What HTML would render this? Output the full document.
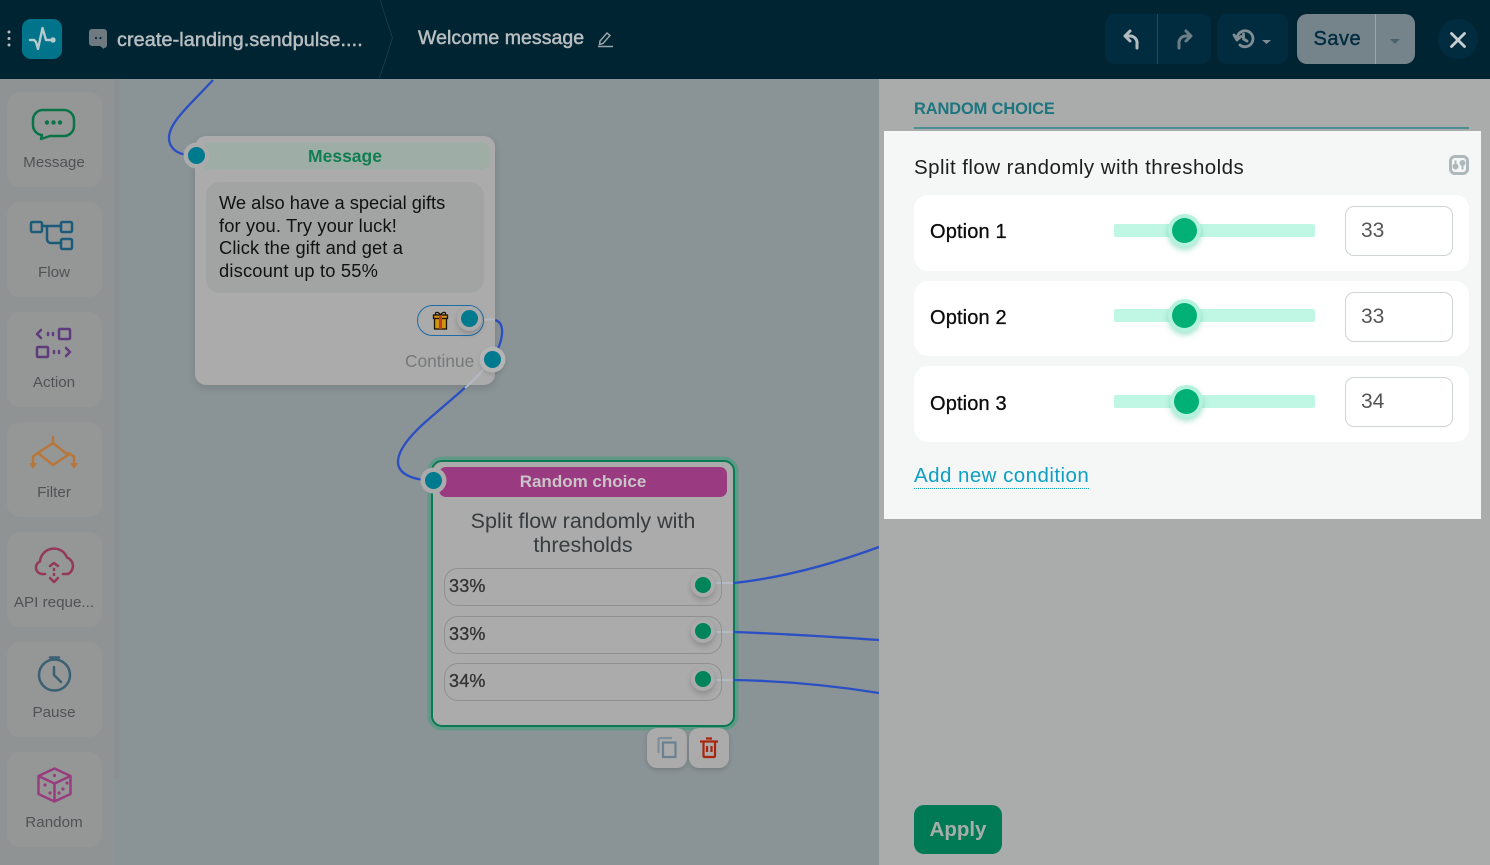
<!DOCTYPE html>
<html><head><meta charset="utf-8">
<style>
*{box-sizing:border-box;margin:0;padding:0}
html,body{width:1490px;height:865px;overflow:hidden}
body{position:relative;background:#8a9396;font-family:"Liberation Sans",sans-serif}
.a{position:absolute}
.t{position:absolute;white-space:nowrap}
#top{left:0;top:0;width:1490px;height:79px;background:#012433}
#side{left:0;top:79px;width:114px;height:786px;background:#909393}
#sb{left:114px;top:79px;width:5px;height:700px;background:#8b8f90}
.tile{position:absolute;left:7px;width:95px;height:95px;background:#959797;border-radius:13px}
.lab{position:absolute;left:0;width:108px;text-align:center;font-size:15.2px;color:#4f5355;white-space:nowrap}
.dot{position:absolute;border-radius:50%;background:#007a8f;width:17px;height:17px;box-shadow:0 0 0 4.5px #ababab}
.gd{position:absolute;left:695px;width:16px;height:16px;border-radius:50%;background:#00845a;box-shadow:0 0 0 4px #ababab,0 3px 6px 4px rgba(0,0,0,.18)}
.pill{position:absolute;left:444px;width:278px;height:38px;border:1px solid #8e9191;border-radius:14px;font-size:18px;color:#333;line-height:35px;padding-left:4px;letter-spacing:.2px;-webkit-text-stroke:.3px #333}
.row{position:absolute;left:914px;width:555px;height:76px;background:#fff;border-radius:14px}
.tr{position:absolute;left:1114px;width:201px;height:13px;background:#c0f6e4;border-radius:2px}
.th{position:absolute;width:25px;height:25px;border-radius:50%;background:#00b074;box-shadow:0 0 0 4px #b5f2dd,0 3px 6px 4px rgba(0,179,119,.35)}
.inp{position:absolute;left:1345px;width:108px;height:50px;border:1px solid #cfd4d4;border-radius:9px;background:#fff;font-size:21px;color:#555;line-height:48px;padding-left:15px}
.opt{position:absolute;left:930px;font-size:20px;color:#0c0c0c;white-space:nowrap;letter-spacing:.15px;-webkit-text-stroke:.3px #0c0c0c}
</style></head><body>
<div class="a" id="side"></div><div class="a" id="sb"></div>

<div class="tile" style="top:92px"></div><div class="tile" style="top:202px"></div><div class="tile" style="top:312px"></div><div class="tile" style="top:422px"></div><div class="tile" style="top:532px"></div><div class="tile" style="top:642px"></div><div class="tile" style="top:752px"></div>
<div class="lab" style="top:154px">Message</div>
<div class="lab" style="top:264px">Flow</div>
<div class="lab" style="top:374px">Action</div>
<div class="lab" style="top:484px">Filter</div>
<div class="lab" style="top:594px">API reque...</div>
<div class="lab" style="top:704px">Pause</div>
<div class="lab" style="top:814px">Random</div>

<svg class="a" style="left:0;top:0" width="120" height="865" fill="none" stroke-width="2.500" stroke-linecap="round" stroke-linejoin="round">
<path d="M42 110h22a10 10 0 0 1 10 10v6a10 10 0 0 1-10 10H50l-9 3 1-4a10 10 0 0 1-9-9v-6a10 10 0 0 1 9-10z" stroke="#0b7348"/>
<g fill="#0b7348" stroke="none"><circle cx="47" cy="122.500" r="2.200"/><circle cx="53.500" cy="122.500" r="2.200"/><circle cx="60" cy="122.500" r="2.200"/></g>
<g stroke="#1c5a7a"><rect x="31" y="222" width="11" height="10" rx="1.500"/><rect x="61" y="222" width="11" height="10" rx="1.500"/><rect x="61" y="239" width="11" height="10" rx="1.500"/><path d="M42 226h19M47 226v13a4 4 0 0 0 4 4h10"/></g>
<g stroke="#5f3a7d"><path d="M41 330l-4 4 4 4M48 333v2M53 333v2"/><rect x="59" y="329" width="11" height="10" rx="1"/><rect x="37" y="347" width="11" height="10" rx="1"/><path d="M54 351v2M59 351v2M66 348l4 4-4 4"/></g>
<g stroke="#b8763a"><path d="M53 437v6M53 443l-15 10 15 12 15-10zM38 453l-5 3.500v8M68 453l6 3.500v8"/></g>
<g fill="#b8763a" stroke="none"><path d="M29 463h8l-4 6zM70 463h8l-4 6z"/></g>
<g stroke="#93395a"><path d="M45 574h-3a6.500 6.500 0 0 1-2-12.500 14 14 0 0 1 27-4 9 9 0 0 1 1 16.500h-5"/><path d="M50 566l4-3 4 3M54 569v1M54 574v1M50 578l4 4 4-4"/></g>
<g stroke="#3b6074"><circle cx="54.500" cy="675" r="15.500"/><path d="M50 657.500h9M54 667v8l7 7"/></g>
<g stroke="#983c80"><path d="M54.500 768.500l16 7.500v18l-16 7.500-16-7.500v-18zM38.500 776l16 7.500 16-7.500M54.500 783.500v18"/></g>
<g fill="#983c80" stroke="none"><circle cx="54.500" cy="775.500" r="1.600"/><circle cx="45" cy="785" r="1.600"/><circle cx="50" cy="793" r="1.600"/><circle cx="59" cy="793" r="1.600"/><circle cx="63" cy="789" r="1.600"/><circle cx="67" cy="783" r="1.600"/></g>
</svg>

<svg class="a" style="left:0;top:0" width="880" height="865" fill="none" stroke="#2a4fc4" stroke-width="2.300">
<path d="M213 80C190 105 169 122 169 138C169 148 177 154 188 155"/>
<path d="M495 320C503 322 503 332 501 340C499 348 496 354 490 361C478 378 460 392 430 418C410 435 398 450 398 462C398 472 408 478 424 480"/>
</svg>

<!-- Message card -->
<div class="a" style="left:195px;top:136px;width:300px;height:249px;background:#ababab;border-radius:11px;box-shadow:0 3px 8px rgba(0,0,0,.12)"></div>
<svg class="a" style="left:0;top:0" width="880" height="865" fill="none" stroke="#b4b9c4" stroke-width="2"><path d="M484 320C488 319 492 319 495 320M490 361C482 372 474 380 465 388"/></svg>
<div class="a t" style="left:201px;top:142px;width:288px;height:28px;background:#9eaea7;border-radius:8px;text-align:center;font-size:17.500px;font-weight:bold;color:#0f7e52;line-height:28px">Message</div>
<div class="a" style="left:206px;top:182px;width:278px;height:111px;background:#a2a3a3;border-radius:14px"></div>
<div class="t" style="left:219px;top:192px;font-size:18.300px;line-height:22.700px;color:#111">We also have a special gifts<br><span style="letter-spacing:.14px">for you. Try your luck!</span><br><span style="letter-spacing:.13px">Click the gift and get a</span><br><span style="letter-spacing:.2px">discount up to 55%</span></div>
<div class="a" style="left:417px;top:305px;width:67px;height:31px;border:1px solid #1c6ca8;border-radius:16px"></div>
<svg class="a" style="left:431px;top:310px" width="20" height="20"><rect x="3.500" y="6" width="12" height="13" fill="#cf9410" stroke="#1b1200" stroke-width="1.300"/><rect x="2.500" y="5" width="14" height="3.500" fill="#cf9410" stroke="#1b1200" stroke-width="1.300"/><rect x="8" y="5" width="3" height="14" fill="#c0392b"/><path d="M9.500 5C7 1 3 2 5 5M9.500 5C12 1 16 2 14 5" fill="none" stroke="#1b1200" stroke-width="1.300"/></svg>
<div class="dot" style="left:461px;top:310px;box-shadow:0 0 0 4px #ababab,0 3px 6px 4px rgba(0,0,0,.18)"></div>
<div class="t" style="left:405px;top:351px;font-size:17.300px;color:#76797a">Continue</div>
<div class="dot" style="left:484px;top:351px;box-shadow:0 0 0 4.500px #b4b4b4,0 2px 5px 4px rgba(0,0,0,.15)"></div>
<div class="dot" style="left:188px;top:147px"></div>

<!-- Random card -->
<div class="a" style="left:431px;top:460px;width:304px;height:267px;background:#ababab;border:2px solid #0a7a55;border-radius:11px;box-shadow:0 0 0 3.500px #5f9a86"></div>
<svg class="a" style="left:0;top:0" width="880" height="865" fill="none" stroke-width="2.300">
<path d="M716 583H733M716 632H733M716 680H733" stroke="#b4b9c4" stroke-width="2"/>
<g stroke="#2a4fc4"><path d="M734 583C780 578 830 565 879 547"/>
<path d="M734 632C790 634 835 637 879 640"/>
<path d="M734 680C790 681 835 686 879 693"/></g></svg>
<div class="a t" style="left:439px;top:467px;width:288px;height:30px;background:#9a3a80;border-radius:7px;text-align:center;font-size:17px;font-weight:bold;color:#c9c4c8;line-height:29px">Random choice</div>
<div class="dot" style="left:425px;top:472px"></div>
<div class="t" style="left:439px;top:509px;width:288px;text-align:center;font-size:21.500px;line-height:24px;color:#383c3e;white-space:normal">Split flow randomly with<br>thresholds</div>
<div class="pill" style="top:568px">33%</div>
<div class="pill" style="top:616px">33%</div>
<div class="pill" style="top:663px">34%</div>
<div class="gd" style="top:577px"></div>
<div class="gd" style="top:623px"></div>
<div class="gd" style="top:671px"></div>
<div class="a" style="left:647px;top:728px;width:40px;height:40px;background:#ababab;border-radius:10px;box-shadow:0 2px 5px rgba(0,0,0,.15)"></div>
<div class="a" style="left:689px;top:728px;width:40px;height:40px;background:#ababab;border-radius:10px;box-shadow:0 2px 5px rgba(0,0,0,.15)"></div>
<svg class="a" style="left:647px;top:728px" width="82" height="40" fill="none" stroke-width="2.200"><path d="M25 10H13a1.500 1.500 0 0 0-1.500 1.500V25" stroke="#7f8f9a"/><rect x="16" y="14.500" width="12.500" height="14.500" stroke="#6a8192"/><path d="M53 13.500h18M56.500 13.500V28a1 1 0 0 0 1 1h9.500a1 1 0 0 0 1-1V13.500M59 10.500h6M60 18v6M64.500 18v6" stroke="#a8260f"/></svg>

<!-- Right panel -->
<div class="a" style="left:879px;top:79px;width:611px;height:786px;background:#aaacab"></div>
<div class="t" style="left:914px;top:100px;font-size:16.400px;font-weight:bold;color:#1d7580;letter-spacing:-.1px">RANDOM CHOICE</div>
<div class="a" style="left:914px;top:127px;width:555px;height:2px;background:#4c8e97"></div>
<div class="a" style="left:884px;top:131px;width:597px;height:388px;background:#f5f7f7"></div>
<div class="t" style="left:914px;top:156px;font-size:20.500px;color:#1e1e1e;letter-spacing:.45px">Split flow randomly with thresholds</div>
<svg class="a" style="left:1448px;top:154px" width="22" height="22" fill="none" stroke="#adb8ba" stroke-width="2"><rect x="2.500" y="2.500" width="17" height="17" rx="4.500" stroke-width="3"/><path d="M7.500 6.500v9M14.500 6.500v9" /><circle cx="7.500" cy="12.500" r="2" fill="#adb8ba"/><circle cx="14.500" cy="9" r="2" fill="#adb8ba"/></svg>
<div class="row" style="top:195px"></div>
<div class="row" style="top:281px;height:75px"></div>
<div class="row" style="top:366px"></div>
<div class="opt" style="top:221px">Option 1</div>
<div class="opt" style="top:307px">Option 2</div>
<div class="opt" style="top:393px">Option 3</div>
<div class="tr" style="top:224px"></div>
<div class="tr" style="top:309px"></div>
<div class="tr" style="top:395px"></div>
<div class="th" style="left:1172px;top:218px"></div>
<div class="th" style="left:1172px;top:303px"></div>
<div class="th" style="left:1174px;top:389px"></div>
<div class="inp" style="top:206px">33</div>
<div class="inp" style="top:292px">33</div>
<div class="inp" style="top:377px">34</div>
<div class="t" style="left:914px;top:463px;font-size:20.500px;color:#0d9fc4;border-bottom:1px dotted #0d9fc4;line-height:25px;height:26px;letter-spacing:.45px">Add new condition</div>
<div class="a t" style="left:914px;top:805px;width:88px;height:49px;background:#007a55;border-radius:10px;text-align:center;font-size:20.500px;font-weight:bold;color:#a8adaa;line-height:50px">Apply</div>

<!-- Top bar -->
<div class="a" id="top"></div>
<svg class="a" style="left:0;top:0" width="640" height="79" fill="none">
<g fill="#b8bec0"><circle cx="9" cy="32" r="1.500"/><circle cx="9" cy="38.500" r="1.500"/><circle cx="9" cy="45" r="1.500"/></g>
<rect x="22" y="19" width="40" height="40" rx="9" fill="#00748a"/>
<path d="M30 40h4l2 2 2 7 4.500-21 3.500 12h7" stroke="#b5c9cf" stroke-width="2.400" stroke-linejoin="round" stroke-linecap="round"/><circle cx="53" cy="40" r="2.700" fill="#b5c9cf"/>
<path d="M92 29h12a3 3 0 0 1 3 3v13a3 3 0 0 1-3 3v1l-4-3h-8a3 3 0 0 1-3-3V32a3 3 0 0 1 3-3z" fill="#6f7a80"/><g fill="#012433"><circle cx="96" cy="38" r="1.100"/><circle cx="100.500" cy="38" r="1.100"/></g>
<path d="M380 0l12.500 38-13 40" stroke="#1a3a48" stroke-width="1"/>
<path d="M600 41l7-8 3 2.500-7 8-3.500 1zM598 46.500h15" stroke="#98a2a6" stroke-width="1.500"/>
</svg>
<div class="t" style="left:117px;top:29px;font-size:19.800px;color:#b8bec0;letter-spacing:.1px;-webkit-text-stroke:.5px #b8bec0">create-landing.sendpulse....</div>
<div class="t" style="left:418px;top:27px;font-size:19.500px;color:#b8bec0;letter-spacing:.05px;-webkit-text-stroke:.5px #b8bec0">Welcome message</div>

<div class="a" style="left:1105px;top:14px;width:106px;height:50px;background:#012c40;border-radius:10px"></div>
<div class="a" style="left:1157px;top:14px;width:1px;height:50px;background:#2a4857"></div>
<div class="a" style="left:1217px;top:14px;width:71px;height:50px;background:#012c40;border-radius:10px"></div>
<div class="a" style="left:1297px;top:14px;width:118px;height:50px;background:#75838a;border-radius:10px"></div>
<div class="a" style="left:1375px;top:14px;width:1px;height:50px;background:#9aa5a9"></div>
<div class="t" style="left:1313.500px;top:28px;font-size:20px;color:#012c40;letter-spacing:.5px;-webkit-text-stroke:.4px #012c40">Save</div>
<div class="a" style="left:1438px;top:19px;width:40px;height:40px;border-radius:50%;background:#012c40"></div>
<svg class="a" style="left:1090px;top:0" width="400" height="79" fill="none" stroke-linecap="round" stroke-linejoin="round">
<path d="M47 48v-4a7 7 0 0 0-7-8h-5M40 31l-5 5 5 5" stroke="#b3bcbf" stroke-width="3"/>
<path d="M89 48v-4a7 7 0 0 1 7-8h4M96 31l5 5-5 5" stroke="#6c7e86" stroke-width="3"/>
<path d="M147 39a8 8 0 1 1 3 6M144 35l3 5 4-3.500M153.500 34v5l3.500 2" stroke="#808e94" stroke-width="2.800"/>
<path d="M172 40h9l-4.500 4z" fill="#808e94"/>
<path d="M300 39h10l-5 5z" fill="#4a6270"/>
<path d="M361.500 33.500l13 13M374.500 33.500l-13 13" stroke="#c8cfd1" stroke-width="2.800"/>
</svg>
</body></html>
